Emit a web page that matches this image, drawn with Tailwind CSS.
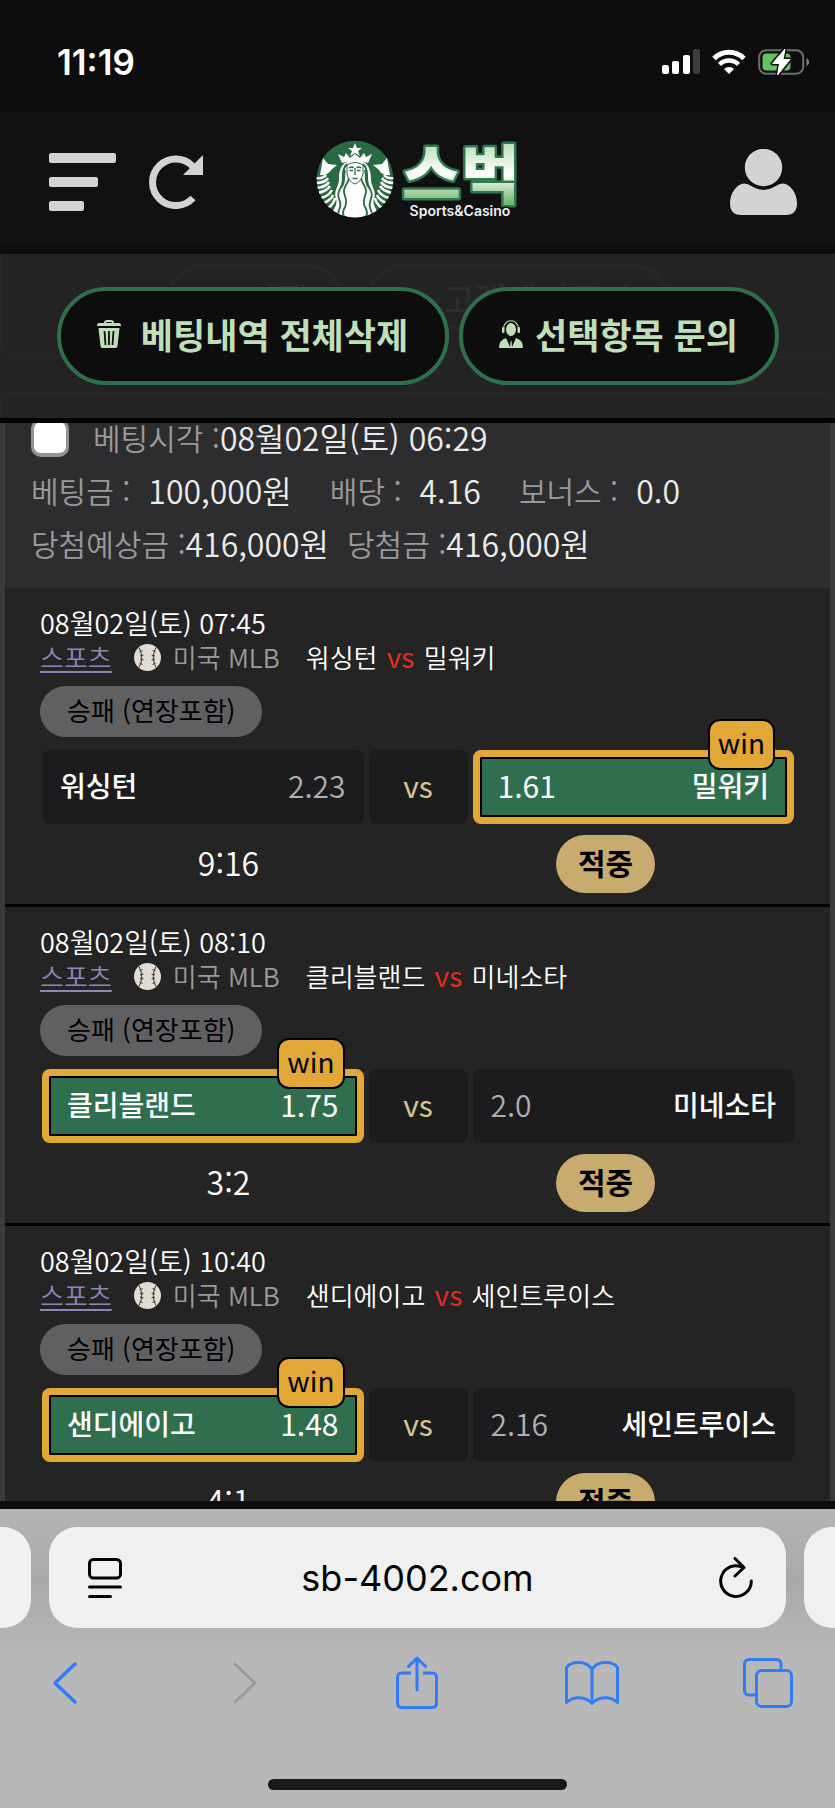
<!DOCTYPE html>
<html lang="ko">
<head>
  <meta charset="UTF-8" />
  <meta name="viewport" content="width=device-width, initial-scale=1.0"/>
  <title>스벅 Sports&amp;Casino</title>
  <script src="https://cdn.jsdelivr.net/npm/@tailwindcss/browser@4"></script>
</head>
<body class="h-screen flex flex-col overflow-hidden bg-[#0d0d0d] text-white font-['Noto_Sans_CJK_KR',sans-serif]">

  <!-- Status bar -->
  <div class="h-[111px] shrink-0 flex items-center justify-between pl-[57px] pr-[25px] pt-3">
    <span class="font-['Inter',sans-serif] font-semibold text-[35px] leading-10">11:19</span>
    <div class="flex items-center gap-3">
      <svg width="38" height="26" viewBox="0 0 38 26" fill="#fff">
        <rect x="0" y="16" width="7" height="9" rx="2"/>
        <rect x="10" y="12" width="7" height="13" rx="2"/>
        <rect x="21" y="6" width="7" height="19" rx="2"/>
        <rect x="31" y="0" width="7" height="25" rx="2" fill="#3d3d3d"/>
      </svg>
      <svg width="34" height="26" viewBox="0 0 34 26" fill="none" stroke="#fff" stroke-width="5">
        <path d="M2 9.500A21 21 0 0 1 32 9.500"/>
        <path d="M7.500 15.500A13.500 13.500 0 0 1 26.500 15.500" stroke-width="4.500"/>
        <path d="M17 25L12 20A7 7 0 0 1 22 20Z" fill="#fff" stroke="none"/>
      </svg>
      <svg width="52" height="28" viewBox="0 0 52 28">
        <rect x="1.200" y="2.200" width="44" height="23.500" rx="7" fill="none" stroke="#6d6d6d" stroke-width="2"/>
        <path d="M48.500 10v8c3.500-1.500 3.500-6.500 0-8z" fill="#7d7d7d"/>
        <rect x="4.500" y="5.500" width="28" height="17" rx="4" fill="#63c466"/>
        <path d="M27 1L14.500 15.500h7L19.500 27L32 11.500h-7z" fill="#fff" stroke="#0d0d0d" stroke-width="4" stroke-linejoin="round"/>
        <path d="M27 1L14.500 15.500h7L19.500 27L32 11.500h-7z" fill="#fff" stroke="#fff" stroke-width="1" stroke-linejoin="round"/>
      </svg>
    </div>
  </div>

  <!-- Site header -->
  <header class="h-[134px] shrink-0 grid grid-cols-[1fr_auto_1fr] items-center bg-[#111] pt-2">
    <div class="flex items-center gap-[33px] pl-[49px]">
      <button aria-label="메뉴">
        <svg width="67" height="58" viewBox="0 0 67 58" fill="#d3d3d3">
          <rect width="67" height="10" rx="2"/>
          <rect y="24" width="49" height="10" rx="2"/>
          <rect y="48" width="35" height="10" rx="2"/>
        </svg>
      </button>
      <button aria-label="새로고침">
        <svg width="54" height="54" viewBox="0 0 54 54">
          <path d="M44 11.500A23.300 23.300 0 1 0 44 43" fill="none" stroke="#d3d3d3" stroke-width="7"/>
          <path d="M54 0v20H34z" fill="#d3d3d3"/>
        </svg>
      </button>
    </div>
    <a href="#" aria-label="스벅" class="flex">
      <svg width="204" height="84" viewBox="0 3 204 84">
        <defs>
          <linearGradient id="word" x1="0" y1="0" x2="0" y2="1">
            <stop offset="0.200" stop-color="#b9dfb4"/>
            <stop offset="0.550" stop-color="#fff"/>
            <stop offset="0.850" stop-color="#74b872"/>
          </linearGradient>
          <clipPath id="disc"><circle cx="39" cy="42" r="38.500"/></clipPath>
        </defs>
        <g clip-path="url(#disc)">
          <g transform="translate(0 2)">
            <circle cx="39" cy="40" r="38.500" fill="#2a6a42"/>
            <path d="M39 4l2 5h5l-4 3 2 5-5-3-5 3 2-5-4-3h5z" fill="#fff"/>
            <path d="M22 15l6 3 2-4 4 5 5-4 5 4 4-5 2 4 6-3-4 9q-13-5-26 0z" fill="#fff"/>
            <path d="M4 36l3-17 5 6 9 1-6 5q-3 6-11 5zM74 36l-3-17-5 6-9 1 6 5q3 6 11 5z" fill="#fff"/>
            <!-- tails -->
            <g fill="none" stroke="#fff" stroke-width="2.500">
              <path d="M0 39q7 1 10-3M0 44q9 0 12-5M1 49q9-1 12-6M2 54q9-2 12-7M5 59q8-2 11-8M8 64q7-3 9-8M12 69q6-4 7-10"/>
              <path d="M78 39q-7 1-10-3M78 44q-9 0-12-5M77 49q-9-1-12-6M76 54q-9-2-12-7M73 59q-8-2-11-8M70 64q-7-3-9-8M66 69q-6-4-7-10"/>
            </g>
            <!-- hair -->
            <path d="M39 21C25 21 23 32 23 40c0 8-6 12-3 20 2 6-3 10-3 14l22 6 22-6c0-4-5-8-3-14 3-8-3-12-3-20 0-8-2-19-16-19z" fill="#fff"/>
            <g fill="none" stroke="#2a6a42" stroke-width="1.800">
              <path d="M31 25c-7 6-2 16-6 23s-3 9-1 15-3 9-2 14M33 38c0 7-6 9-5 15s4 9 1 15-2 6-1 10M29 31c-2 9 1 11-4 18"/>
              <path d="M47 25c7 6 2 16 6 23s3 9 1 15 3 9 2 14M45 38c0 7 6 9 5 15s-4 9-1 15 2 6 1 10M49 31c2 9-1 11 4 18"/>
            </g>
            <!-- face -->
            <path d="M31 26q8-5 16 0v9q-2 8-8 10-6-2-8-10z" fill="#fff" stroke="#2a6a42" stroke-width="1"/>
            <g fill="none" stroke="#2a6a42" stroke-width="1.300">
              <path d="M33 29q3-2 4.500 0M40.500 29q3-2 4.500 0M33.500 31.500h3.500M41 31.500h3.500M39 29v7M36.500 39.500h5"/>
            </g>
          </g>
        </g>
        <text x="145" y="61" text-anchor="middle" font-family="'Noto Sans CJK KR', sans-serif" font-weight="900" font-size="64" fill="url(#word)" stroke="#2f7a50" stroke-width="5" stroke-linejoin="round" paint-order="stroke">스벅</text>
        <text x="144" y="79" text-anchor="middle" font-family="Inter, sans-serif" font-weight="600" font-size="14" fill="#eceff5" stroke="#111" stroke-width="3" paint-order="stroke">Sports&amp;Casino</text>
      </svg>
    </a>
    <button aria-label="내 정보" class="justify-self-end mr-[38px]">
      <svg width="67" height="66" viewBox="0 0 67 66" fill="#d3d3d3">
        <circle cx="33.500" cy="18.500" r="18.700"/>
        <path d="M14 34.500q4 0 8 3 11.500 7 23 0 4-3 8-3C60 35 67 44 67 54q0 12-11 12H11Q0 66 0 54C0 44 7 35 14 34.500z"/>
      </svg>
    </button>
  </header>

  <!-- Actions -->
  <section class="relative mt-[9px] shrink-0 bg-[#232323] border-b-[5px] border-black pt-[33px] pb-[33px] flex justify-center gap-[10px] overflow-hidden">
    <!-- page content showing faintly behind the bar -->
    <div aria-hidden="true" class="absolute inset-x-0 top-0 text-[#2c2d2c] text-[34px] leading-[62px] font-medium">
      <div class="h-[104px] border-2 border-t-0 border-[#262626] rounded-b-lg pt-[10px] flex justify-center gap-[26px]">
        <div class="w-[174px] h-[66px] rounded-full border-4 border-[#242826] pl-[74px]">선택</div>
        <div class="w-[300px] h-[66px] rounded-full border-4 border-[#242826] pl-[72px] whitespace-nowrap">고객센터문의</div>
      </div>
      <div class="mt-[34px] h-10 border-2 border-[#262626] rounded-t-lg"></div>
    </div>
    <button class="relative h-[98px] w-[392px] rounded-full border-4 border-[#2f6f4e] bg-[#0d0d0d] text-[#bfdfb9] text-[35px] leading-10 font-bold flex items-center justify-center gap-5 pb-1">
      <svg width="24" height="28" viewBox="0 0 24 28" fill="#bfdfb9">
        <path d="M7 3q0-3 3-3h4q3 0 3 3h5q2 0 2 3H0q0-3 2-3zM9 3h6q0-1-1-1h-4q-1 0-1 1z"/>
        <path d="M1.500 8h21l-2 18q0 2-2 2h-13q-2 0-2-2z"/>
        <path d="M7.500 11l1 14M12 11v14M16.500 11l-1 14" stroke="#0d0d0d" stroke-width="1.800"/>
      </svg>
      베팅내역 전체삭제
    </button>
    <button class="relative h-[98px] w-[320px] rounded-full border-4 border-[#2f6f4e] bg-[#0d0d0d] text-[#bfdfb9] text-[35px] leading-10 font-bold flex items-center justify-center gap-3 pb-1">
      <svg width="24" height="28" viewBox="0 0 24 28" fill="#bfdfb9">
        <ellipse cx="12" cy="9.500" rx="5" ry="6.500"/>
        <path d="M4.500 9C4.500-2 19.500-2 19.500 9" fill="none" stroke="#bfdfb9" stroke-width="1.200"/>
        <rect x="3" y="7" width="2.500" height="6" rx="1"/>
        <rect x="18.500" y="7" width="2.500" height="6" rx="1"/>
        <path d="M0 28q0-8 7-10l4 9 .500-6h1l.500 6 4-9q7 2 7 10z"/>
      </svg>
      선택항목 문의
    </button>
  </section>

  <!-- Bet slip -->
  <main class="flex-1 min-h-0 overflow-hidden bg-[#3b3b3b] px-[5px] font-[350]">
    <div class="-mt-[12px] bg-[#2d2d2f] pl-[26px] pb-[18px] text-[32px] leading-[53px] text-[#ececec]">
      <div class="flex items-center whitespace-nowrap">
        <input type="checkbox" id="pick" class="appearance-none size-[38px] rounded-[10px] border-3 border-b-4 border-[#929294] bg-white mr-6"/>
        <label for="pick" class="text-[#9a9a9a] text-[30px]">베팅시각 :</label><span>08월02일(토) 06:29</span>
      </div>
      <div class="flex whitespace-nowrap">
        <span class="text-[#9a9a9a] text-[30px] mr-[18px]">베팅금 :</span><span class="mr-[38px]">100,000원</span>
        <span class="text-[#9a9a9a] text-[30px] mr-[18px]">배당 :</span><span class="mr-[38px]">4.16</span>
        <span class="text-[#9a9a9a] text-[30px] mr-[18px]">보너스 :</span><span>0.0</span>
      </div>
      <div class="flex whitespace-nowrap">
        <span class="text-[#9a9a9a] text-[30px]">당첨예상금 :</span><span class="mr-[18px]">416,000원</span>
        <span class="text-[#9a9a9a] text-[30px]">당첨금 :</span><span>416,000원</span>
      </div>
    </div>
    <div id="matches"></div>
  </main>

  <!-- Browser bar -->
  <footer class="shrink-0 mt-2 bg-[#b8b8b8] text-black overflow-hidden">
    <div class="pt-[18px] pb-7 flex gap-[18px] bg-linear-to-b from-[#b4b4b4] via-[#a9a9a9] to-[#b8b8b8]">
      <div class="w-[31px] h-[101px] rounded-r-[28px] bg-[#f0f0f0]"></div>
      <div class="flex-1 h-[101px] rounded-[28px] bg-[#f0f0f0] flex items-center justify-between pl-[39px] pr-[33px]">
        <button aria-label="페이지 설정">
          <svg width="34" height="40" viewBox="0 0 34 40" fill="none" stroke="#000" stroke-width="3" stroke-linecap="round">
            <rect x="1.500" y="1.500" width="31" height="18.500" rx="4"/>
            <path d="M1.500 29h31M1.500 38.500h21"/>
          </svg>
        </button>
        <input type="text" aria-label="주소" value="sb-4002.com" class="min-w-0 flex-1 pr-1.5 bg-transparent text-center font-['Inter',sans-serif] text-[36px] leading-[48px]"/>
        <button aria-label="다시 로드">
          <svg width="34" height="42" viewBox="0 0 34 42" fill="none" stroke="#000" stroke-width="3" stroke-linecap="round" stroke-linejoin="round">
            <path d="M24 10.500A15.300 15.300 0 1 0 32.300 24"/>
            <path d="M16 1.500l9 9-9 8.500"/>
          </svg>
        </button>
      </div>
      <div class="w-[31px] h-[101px] rounded-l-[28px] bg-[#f0f0f0]"></div>
    </div>
    <nav class="flex justify-between pl-[41px] pr-[43px] text-[#337bf7]">
      <button aria-label="뒤로" class="w-12 h-[54px] flex items-center justify-center">
        <svg width="24" height="42" viewBox="0 0 24 42" fill="none" stroke="currentColor" stroke-width="3.500" stroke-linecap="round" stroke-linejoin="round"><path d="M22 2L2 21l20 19"/></svg>
      </button>
      <button aria-label="앞으로" class="w-12 h-[54px] flex items-center justify-end pr-2 text-[#9b9b9b]">
        <svg width="24" height="42" viewBox="0 0 24 42" fill="none" stroke="currentColor" stroke-width="3" stroke-linecap="round" stroke-linejoin="round"><path d="M2 2l20 19L2 40"/></svg>
      </button>
      <button aria-label="공유" class="w-12 h-[54px] flex items-center justify-center">
        <svg width="42" height="54" viewBox="0 0 42 54" fill="none" stroke="currentColor" stroke-width="3" stroke-linecap="round" stroke-linejoin="round">
          <path d="M15 17H6q-4.500 0-4.500 4.500V47q0 4.500 4.500 4.500h30q4.500 0 4.500-4.500V21.500Q40.500 17 36 17h-9" stroke-linecap="butt"/>
          <path d="M21 34V2M12.500 10.500L21 2l8.500 8.500"/>
        </svg>
      </button>
      <button aria-label="책갈피" class="w-12 h-[54px] flex items-center justify-center">
        <svg class="shrink-0" width="54" height="46" viewBox="0 0 54 46" fill="none" stroke="currentColor" stroke-width="3" stroke-linejoin="round">
          <path d="M27 9.500C22 1 7 0 1.500 7.500v35C8 36 21 36 27 43.500 33 36 46 36 52.500 42.500v-35C47 0 32 1 27 9.500zM27 9.500v34"/>
        </svg>
      </button>
      <button aria-label="탭" class="w-12 h-[54px] flex items-center justify-center">
        <svg class="shrink-0" width="50" height="50" viewBox="0 0 50 50" fill="none" stroke="currentColor" stroke-width="3">
          <rect x="13.500" y="12.500" width="35" height="36" rx="5"/>
          <path d="M38 12.500V6.500q0-5-5-5H6.500q-5 0-5 5v25.500q0 5 5 5h7"/>
        </svg>
      </button>
    </nav>
    <div class="mx-auto mt-[69px] mb-[18px] w-[299px] h-[11px] rounded-full bg-[#191919]"></div>
  </footer>

  <script>
    const matches = [
      { time: "08월02일(토) 07:45", home: "워싱턴", away: "밀워키", h: "2.23", a: "1.61", win: "away", score: "9:16" },
      { time: "08월02일(토) 08:10", home: "클리블랜드", away: "미네소타", h: "1.75", a: "2.0", win: "home", score: "3:2" },
      { time: "08월02일(토) 10:40", home: "샌디에이고", away: "세인트루이스", h: "1.48", a: "2.16", win: "home", score: "4:1" }
    ];

    const ball = `<svg width="27" height="27" viewBox="0 0 27 27" class="ml-[22px] mr-3">
      <circle cx="13.500" cy="13.500" r="13.500" fill="#e3dcd5"/>
      <path d="M5 3.500Q10.500 13.500 5 23.500M22 3.500Q16.500 13.500 22 23.500" fill="none" stroke="#333" stroke-width="1"/>
      <path d="M5.500 8l3-1.500M6 12l3.500-1M6 15l3.500 1M5.500 19l3 1.500M21.500 8l-3-1.500M21 12l-3.500-1M21 15l-3.500 1M21.500 19l-3 1.500" stroke="#333" stroke-width="1"/>
    </svg>`;

    function cell(first, second, won) {
      const box = won
        ? "border-7 border-[#e1a737] bg-[#2f6f4e] inset-ring-2 inset-ring-black text-white"
        : "bg-[#1c1c1e]";
      const badge = won
        ? `<span class="absolute right-3 -top-[38px] h-[51px] px-2 rounded-xl border-2 border-black bg-[#e1a737] text-black text-[28px] leading-[42px] font-normal">win</span>`
        : "";
      return `<div class="relative h-[74px] rounded-lg px-[18px] pb-1 flex items-center justify-between ${box}">${first}${second}${badge}</div>`;
    }

    function row(m) {
      const team = name => `<span class="font-medium text-white text-[28px]">${name}</span>`;
      const odds = (v, won) => `<span class="${won ? "text-white font-normal" : "text-[#b0b0b0]"}">${v}</span>`;
      const homeWon = m.win === "home";
      return `
        <article class="bg-[#242424] border-b-3 border-black pt-[18px] pb-[11px] pl-[35px] pr-9">
          <div class="text-[27px] leading-[34px]">${m.time}</div>
          <div class="text-[26px] leading-[34px] flex items-center whitespace-pre">
            <a href="#" class="text-[#8f86b5] underline underline-offset-3">스포츠</a>${ball}<span class="text-[#9a9a9a] mr-[26px]">미국 MLB</span><span>${m.home} <span class="text-[#e02d22] font-normal mx-0.5 text-[28px] leading-none">vs</span> ${m.away}</span>
          </div>
          <div class="mt-3 h-[51px] w-fit px-[27px] rounded-full bg-[#606062] text-black text-[26px] leading-[48px] font-normal">승패 (연장포함)</div>
          <div class="mt-[13px] pl-0.5 grid grid-cols-[1fr_99px_1fr] gap-[5px] text-[30px] leading-[40px]">
            ${cell(team(m.home), odds(m.h, homeWon), homeWon)}
            <div class="rounded-lg bg-[#1c1c1e] text-[#d3c68d] font-normal flex items-center justify-center pb-1">vs</div>
            ${cell(odds(m.a, !homeWon), team(m.away), !homeWon)}
          </div>
          <div class="mt-[11px] grid grid-cols-2 justify-items-center text-[32px] leading-[54px]">
            <span>${m.score}</span>
            <span class="h-[58px] px-[22px] rounded-full bg-[#c8ab6e] text-black text-[30px] font-bold">적중</span>
          </div>
        </article>`;
    }

    document.getElementById("matches").innerHTML = matches.map(row).join("");
  </script>
</body>
</html>
